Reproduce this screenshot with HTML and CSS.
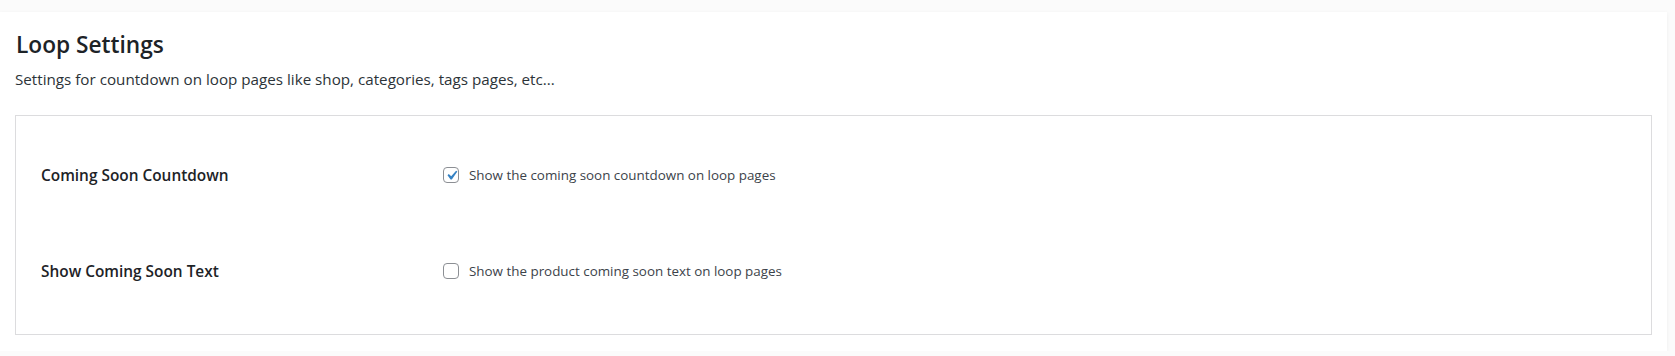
FILE: index.html
```html
<!DOCTYPE html>
<html>

<head>
  <title>Loop Settings</title>
  <meta name="viewport" content="initial-scale=1.0">
  <link rel="stylesheet" href="styles.css">
</head>

<body>
  <div class="card">
    <h2 class="card-title">Loop Settings</h2>
    <p class="card-desc">Settings for countdown on loop pages like shop, categories, tags pages, etc...</p>

    <div class="settings">
      <div class="row">
        <div class="row-label">Coming Soon Countdown</div>
        <label class="row-field" for="loop_countdown">
          <input type="checkbox" id="loop_countdown" name="loop_countdown" checked>
          <span class="box">
            <svg class="tick" viewBox="0 0 20 20"><path d="M14.83 4.89l1.34.94-5.81 8.38H9.02L5.78 9.67l1.34-1.25 2.57 2.4z"/></svg>
          </span>
          Show the coming soon countdown on loop pages
        </label>
      </div>
      <div class="row">
        <div class="row-label">Show Coming Soon Text</div>
        <label class="row-field" for="loop_text">
          <input type="checkbox" id="loop_text" name="loop_text">
          <span class="box">
            <svg class="tick" viewBox="0 0 20 20"><path d="M14.83 4.89l1.34.94-5.81 8.38H9.02L5.78 9.67l1.34-1.25 2.57 2.4z"/></svg>
          </span>
          Show the product coming soon text on loop pages
        </label>
      </div>
    </div>
  </div>
</body>

</html>
```

FILE: styles.css
```css
body {
  margin: 0;
  background-color: #fbfbfb;
  font-family: "Open Sans", Arial, Helvetica, sans-serif;
  color: #1d2327;
}

.card {
  margin-top: 12px;
  width: 1667px;
  height: 339px;
  box-sizing: border-box;
  background-color: #fff;
  box-shadow: 0 1px 4px rgba(0, 0, 0, 0.06);
  padding: 0 15px 16px 15px;
  display: flex;
  flex-direction: column;
}

.card-title {
  margin: 18px 0 0 1px;
  font-size: 22.7px;
  font-weight: 600;
  line-height: 30px;
}

.card-desc {
  margin: 9px 0 0 0;
  font-size: 15.2px;
  line-height: 20px;
  color: #2c3338;
}

.settings {
  margin-top: 26px;
  border: 1px solid #dcdcde;
  padding: 11px 25px 15px 25px;
  flex: 1;
  display: flex;
  flex-direction: column;
}

.row {
  height: 96px;
  display: flex;
  align-items: center;
}

.row-label {
  width: 402px;
  font-size: 15.4px;
  font-weight: 600;
  color: #1d2327;
}

.row-field {
  display: flex;
  align-items: center;
  font-size: 13.4px;
  color: #3c434a;
  cursor: pointer;
}

.row-field input {
  display: none;
}

.box {
  width: 14px;
  height: 14px;
  border: 1px solid #8c8f94;
  border-radius: 4px;
  margin-right: 10px;
  position: relative;
  background-color: #fff;
}

.tick {
  display: none;
  position: absolute;
  left: -2px;
  top: -2px;
  width: 19px;
  height: 19px;
  fill: #3582c4;
}

.row-field input:checked + .box .tick {
  display: block;
}
```
